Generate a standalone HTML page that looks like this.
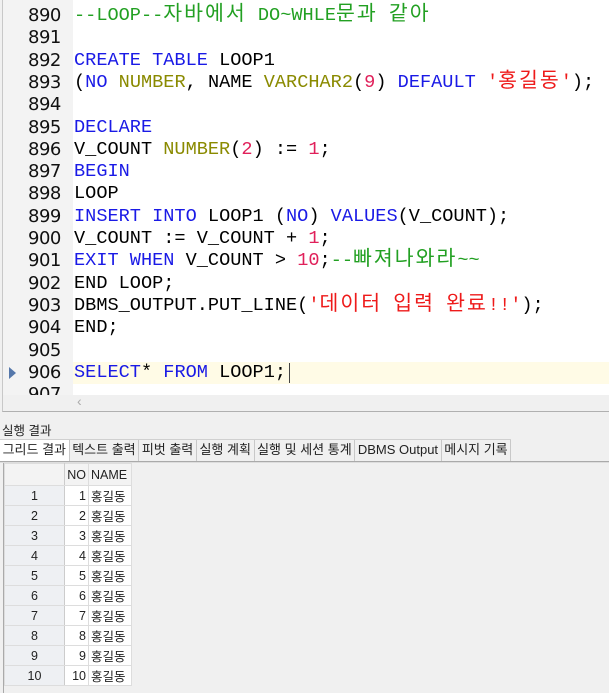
<!DOCTYPE html>
<html><head><meta charset="utf-8"><style>
*{margin:0;padding:0;box-sizing:border-box}
body{width:609px;height:693px;overflow:hidden;background:#f0f0f0;font-family:"Liberation Sans","Noto Sans CJK KR",sans-serif;position:relative}
#ed{position:absolute;left:2px;top:0;width:607px;height:412px;background:#fff;border-left:1px solid #c8c8c8;border-bottom:1px solid #b0b0b0;overflow:hidden}
#gut{position:absolute;left:0;top:0;width:70px;height:395px;background:#f3f3f3}
.ln{position:absolute;left:0;width:609px;height:22.3px;line-height:22.3px;font-family:"Liberation Mono","Noto Sans CJK KR",monospace;font-size:18.6px;color:#000;white-space:pre}
.n{position:absolute;left:26px;width:44px;color:#111;font-family:"DejaVu Sans","Noto Sans CJK KR",sans-serif;font-size:18px;letter-spacing:-0.5px}
.c{position:absolute;left:72px}
.ko{font-size:20.5px;letter-spacing:2px}
.k{color:#1a1ae6}.t{color:#8a8a00}.s{color:#ee1a1a}.m{color:#22a022}.d{color:#e0205a}
#hl{position:absolute;left:70px;top:362px;width:537px;height:22px;background:#fffbe6}
#hs{position:absolute;left:0;top:395px;width:607px;height:17px;background:#f0f0f0}
.lb{position:absolute;font-size:12.5px;color:#222}
#tabs{position:absolute;left:0;top:439px;height:22px;display:flex;border-top:1px solid #d0d0d0}
#tabs div{font-size:13px;height:21px;line-height:20px;padding:0 2.6px;border-right:1px solid #c8c8c8;color:#222;background:#f0f0f0;white-space:nowrap}
#tabs div.a{background:#fff}
#tl{position:absolute;left:0;top:461px;width:609px;height:2px;border-top:1px solid #aaa;border-bottom:1px solid #ddd}
#grid{position:absolute;left:3px;top:463px;border-left:1px solid #aaa;width:606px;height:230px;background:#f0f0f0}
table{border-collapse:collapse;font-size:12.5px;color:#222}
td{height:19.9px;border:1px solid #ddd;padding:0 2px}
td.r{background:#eef0f3;width:60px;text-align:center;border-right:1px solid #ccc}
td.no{background:#fff;width:24px;text-align:right}
td.nm{background:#fff;width:43px}
tr.h td{background:#f3f3f3;height:22px}
</style></head><body>
<div id="ed">
<div id="gut"></div>
<div id="hl"></div>
<div id="hs"><span style="position:absolute;left:74px;top:-2px;color:#aaa;font-size:14px">‹</span></div>
<div style="position:absolute;left:286px;top:363px;width:1px;height:20px;background:#444"></div>
<div style="position:absolute;left:6px;top:367px;width:0;height:0;border-top:6px solid transparent;border-bottom:6px solid transparent;border-left:7px solid #5577aa"></div>
</div>
<div id="lines" style="position:absolute;left:2px;top:0">
<div class="ln" style="top:5px"><span class="n">890</span><span class="c m">--LOOP--<span class="ko">자바에서</span> DO~WHLE<span class="ko">문과</span> <span class="ko">같아</span></span></div>
<div class="ln" style="top:27.3px"><span class="n">891</span></div>
<div class="ln" style="top:49.6px"><span class="n">892</span><span class="c"><span class="k">CREATE TABLE</span> LOOP1</span></div>
<div class="ln" style="top:71.9px"><span class="n">893</span><span class="c">(<span class="k">NO</span> <span class="t">NUMBER</span>, NAME <span class="t">VARCHAR2</span>(<span class="d">9</span>) <span class="k">DEFAULT</span> <span class="s">'<span class="ko">홍길동</span>'</span>);</span></div>
<div class="ln" style="top:94.2px"><span class="n">894</span></div>
<div class="ln" style="top:116.5px"><span class="n">895</span><span class="c k">DECLARE</span></div>
<div class="ln" style="top:138.8px"><span class="n">896</span><span class="c">V_COUNT <span class="t">NUMBER</span>(<span class="d">2</span>) := <span class="d">1</span>;</span></div>
<div class="ln" style="top:161.1px"><span class="n">897</span><span class="c k">BEGIN</span></div>
<div class="ln" style="top:183.4px"><span class="n">898</span><span class="c">LOOP</span></div>
<div class="ln" style="top:205.7px"><span class="n">899</span><span class="c"><span class="k">INSERT INTO</span> LOOP1 (<span class="k">NO</span>) <span class="k">VALUES</span>(V_COUNT);</span></div>
<div class="ln" style="top:228px"><span class="n">900</span><span class="c">V_COUNT := V_COUNT + <span class="d">1</span>;</span></div>
<div class="ln" style="top:250.3px"><span class="n">901</span><span class="c"><span class="k">EXIT WHEN</span> V_COUNT &gt; <span class="d">10</span>;<span class="m">--<span class="ko">빠져나와라</span>~~</span></span></div>
<div class="ln" style="top:272.6px"><span class="n">902</span><span class="c">END LOOP;</span></div>
<div class="ln" style="top:294.9px"><span class="n">903</span><span class="c">DBMS_OUTPUT.PUT_LINE(<span class="s">'<span class="ko">데이터</span> <span class="ko">입력</span> <span class="ko">완료</span>!!'</span>);</span></div>
<div class="ln" style="top:317.2px"><span class="n">904</span><span class="c">END;</span></div>
<div class="ln" style="top:339.5px"><span class="n">905</span></div>
<div class="ln" style="top:361.8px"><span class="n">906</span><span class="c"><span class="k">SELECT</span>* <span class="k">FROM</span> LOOP1;</span></div>
<div class="ln" style="top:384.1px;height:11px;overflow:hidden"><span class="n">907</span></div>
</div>
<div class="lb" style="left:2px;top:420px">실행 결과</div>
<div id="tabs"><div class="a">그리드 결과</div><div>텍스트 출력</div><div>피벗 출력</div><div>실행 계획</div><div>실행 및 세션 통계</div><div>DBMS Output</div><div>메시지 기록</div></div>
<div id="tl"></div>
<div id="grid"><table>
<tr class="h"><td class="r" style="background:#f3f3f3"></td><td class="no" style="background:#f3f3f3">NO</td><td class="nm" style="background:#f3f3f3">NAME</td></tr>
<tr><td class="r">1</td><td class="no">1</td><td class="nm">홍길동</td></tr>
<tr><td class="r">2</td><td class="no">2</td><td class="nm">홍길동</td></tr>
<tr><td class="r">3</td><td class="no">3</td><td class="nm">홍길동</td></tr>
<tr><td class="r">4</td><td class="no">4</td><td class="nm">홍길동</td></tr>
<tr><td class="r">5</td><td class="no">5</td><td class="nm">홍길동</td></tr>
<tr><td class="r">6</td><td class="no">6</td><td class="nm">홍길동</td></tr>
<tr><td class="r">7</td><td class="no">7</td><td class="nm">홍길동</td></tr>
<tr><td class="r">8</td><td class="no">8</td><td class="nm">홍길동</td></tr>
<tr><td class="r">9</td><td class="no">9</td><td class="nm">홍길동</td></tr>
<tr><td class="r">10</td><td class="no">10</td><td class="nm">홍길동</td></tr>
</table></div>
</body></html>
